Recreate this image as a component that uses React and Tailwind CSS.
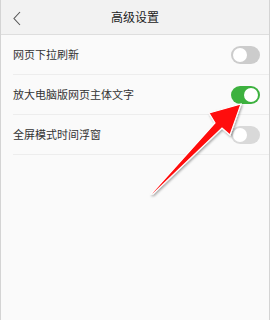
import React from 'react';

const rows = [
  { label: '网页下拉刷新', state: 'off' },
  { label: '放大电脑版网页主体文字', state: 'on' },
  { label: '全屏模式时间浮窗', state: 'dim' },
];

function Toggle({ state }) {
  const track =
    state === 'on' ? 'bg-[#3db13f] justify-end' : state === 'dim' ? 'bg-[#d9d9d9] justify-start' : 'bg-[#cccccc] justify-start';
  return (
    <div className={`w-[29px] h-[18px] rounded-full flex items-center px-[2px] ${track}`}>
      <div className="w-[14px] h-[14px] rounded-full bg-white" />
    </div>
  );
}

export default function App() {
  return (
    <div
      className="relative w-[270px] h-[320px] overflow-hidden bg-[#fafafa] border-x border-[#d4d4d4]"
      style={{ fontFamily: '"Noto Sans CJK SC", "Noto Sans", sans-serif' }}
    >
      <div className="relative h-[35px] bg-[#f2f2f2] border-b border-[#dedede] flex items-center justify-center">
        <svg className="absolute left-[11px] top-[11px]" width="10" height="15" viewBox="0 0 10 15" fill="none" stroke="#555" strokeWidth="1.1">
          <path d="M8 1 L2 7.5 L8 14" />
        </svg>
        <span className="text-[12px] text-[#222]">高级设置</span>
      </div>

      <div className="pl-3">
        {rows.map((r) => (
          <div key={r.label} className="h-[40px] flex items-center justify-between border-b border-[#ededed] pr-[9px]">
            <span className="text-[11px] text-[#333]">{r.label}</span>
            <Toggle state={r.state} />
          </div>
        ))}
      </div>

      <svg className="absolute left-0 top-0 pointer-events-none" width="270" height="320" viewBox="0 0 270 320">
        <defs>
          <filter id="sh" x="-20%" y="-20%" width="140%" height="140%">
            <feDropShadow dx="1" dy="1.5" stdDeviation="1.2" floodColor="#000" floodOpacity="0.35" />
          </filter>
        </defs>
        <polygon
          points="150,194 214,123 208,113 240,104 229,135 221,128 152,194"
          fill="#ff0a0a"
          stroke="#ffffff"
          strokeWidth="1.2"
          strokeLinejoin="miter"
          filter="url(#sh)"
        />
      </svg>
    </div>
  );
}
